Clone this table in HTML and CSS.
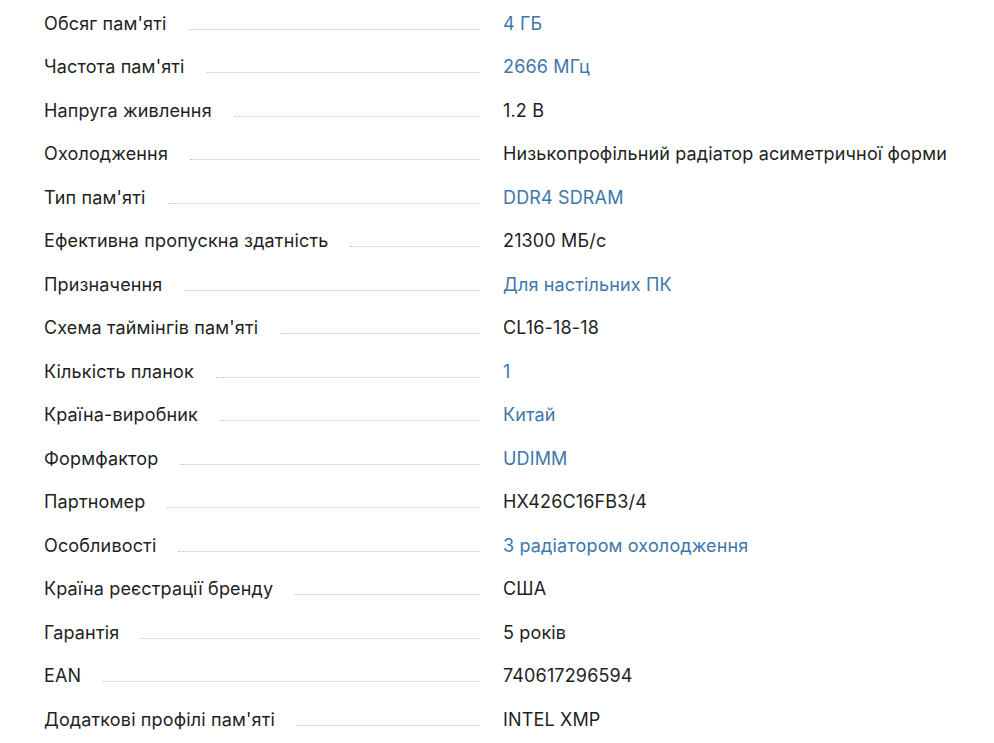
FILE: index.html
```html
<!DOCTYPE html>
<html lang="uk">
<head>
<meta charset="utf-8">
<link rel="stylesheet" href="styles.css">
</head>
<body>
<dl class="specs">
  <div class="row"><dt class="label"><span>Обсяг пам'яті</span></dt><dd class="value link">4 ГБ</dd></div>
  <div class="row"><dt class="label"><span>Частота пам'яті</span></dt><dd class="value link">2666 МГц</dd></div>
  <div class="row"><dt class="label"><span>Напруга живлення</span></dt><dd class="value">1.2 В</dd></div>
  <div class="row"><dt class="label"><span>Охолодження</span></dt><dd class="value">Низькопрофільний радіатор асиметричної форми</dd></div>
  <div class="row"><dt class="label"><span>Тип пам'яті</span></dt><dd class="value link">DDR4 SDRAM</dd></div>
  <div class="row"><dt class="label"><span>Ефективна пропускна здатність</span></dt><dd class="value">21300 МБ/с</dd></div>
  <div class="row"><dt class="label"><span>Призначення</span></dt><dd class="value link">Для настільних ПК</dd></div>
  <div class="row"><dt class="label"><span>Схема таймінгів пам'яті</span></dt><dd class="value">CL16-18-18</dd></div>
  <div class="row"><dt class="label"><span>Кількість планок</span></dt><dd class="value link">1</dd></div>
  <div class="row"><dt class="label"><span>Країна-виробник</span></dt><dd class="value link">Китай</dd></div>
  <div class="row"><dt class="label"><span>Формфактор</span></dt><dd class="value link">UDIMM</dd></div>
  <div class="row"><dt class="label"><span>Партномер</span></dt><dd class="value">HX426C16FB3/4</dd></div>
  <div class="row"><dt class="label"><span>Особливості</span></dt><dd class="value link">З радіатором охолодження</dd></div>
  <div class="row"><dt class="label"><span>Країна реєстрації бренду</span></dt><dd class="value">США</dd></div>
  <div class="row"><dt class="label"><span>Гарантія</span></dt><dd class="value">5 років</dd></div>
  <div class="row"><dt class="label"><span>EAN</span></dt><dd class="value">740617296594</dd></div>
  <div class="row"><dt class="label"><span>Додаткові профілі пам'яті</span></dt><dd class="value">INTEL XMP</dd></div>
</dl>
</body>
</html>
```

FILE: styles.css
```css
html, body {
  margin: 0;
  padding: 0;
  background: #fff;
}
body {
  font-family: Inter, "Noto Sans", sans-serif;
  font-size: 18px;
  letter-spacing: 0.15px;
  color: #221f1f;
}
.specs {
  margin: 0;
  padding: 1.5px 0 0 44px;
}
.row {
  display: flex;
  align-items: baseline;
  height: 43.5px;
  line-height: 43.5px;
}
.label {
  flex: 0 0 436px;
  display: flex;
  align-items: baseline;
  margin: 0;
}
.label::after {
  content: "";
  flex: 1;
  margin-left: 22px;
  border-bottom: 1px dotted #c4c4c4;
}
.value {
  margin: 0 0 0 23px;
}
.link {
  color: #3e77aa;
}
```
